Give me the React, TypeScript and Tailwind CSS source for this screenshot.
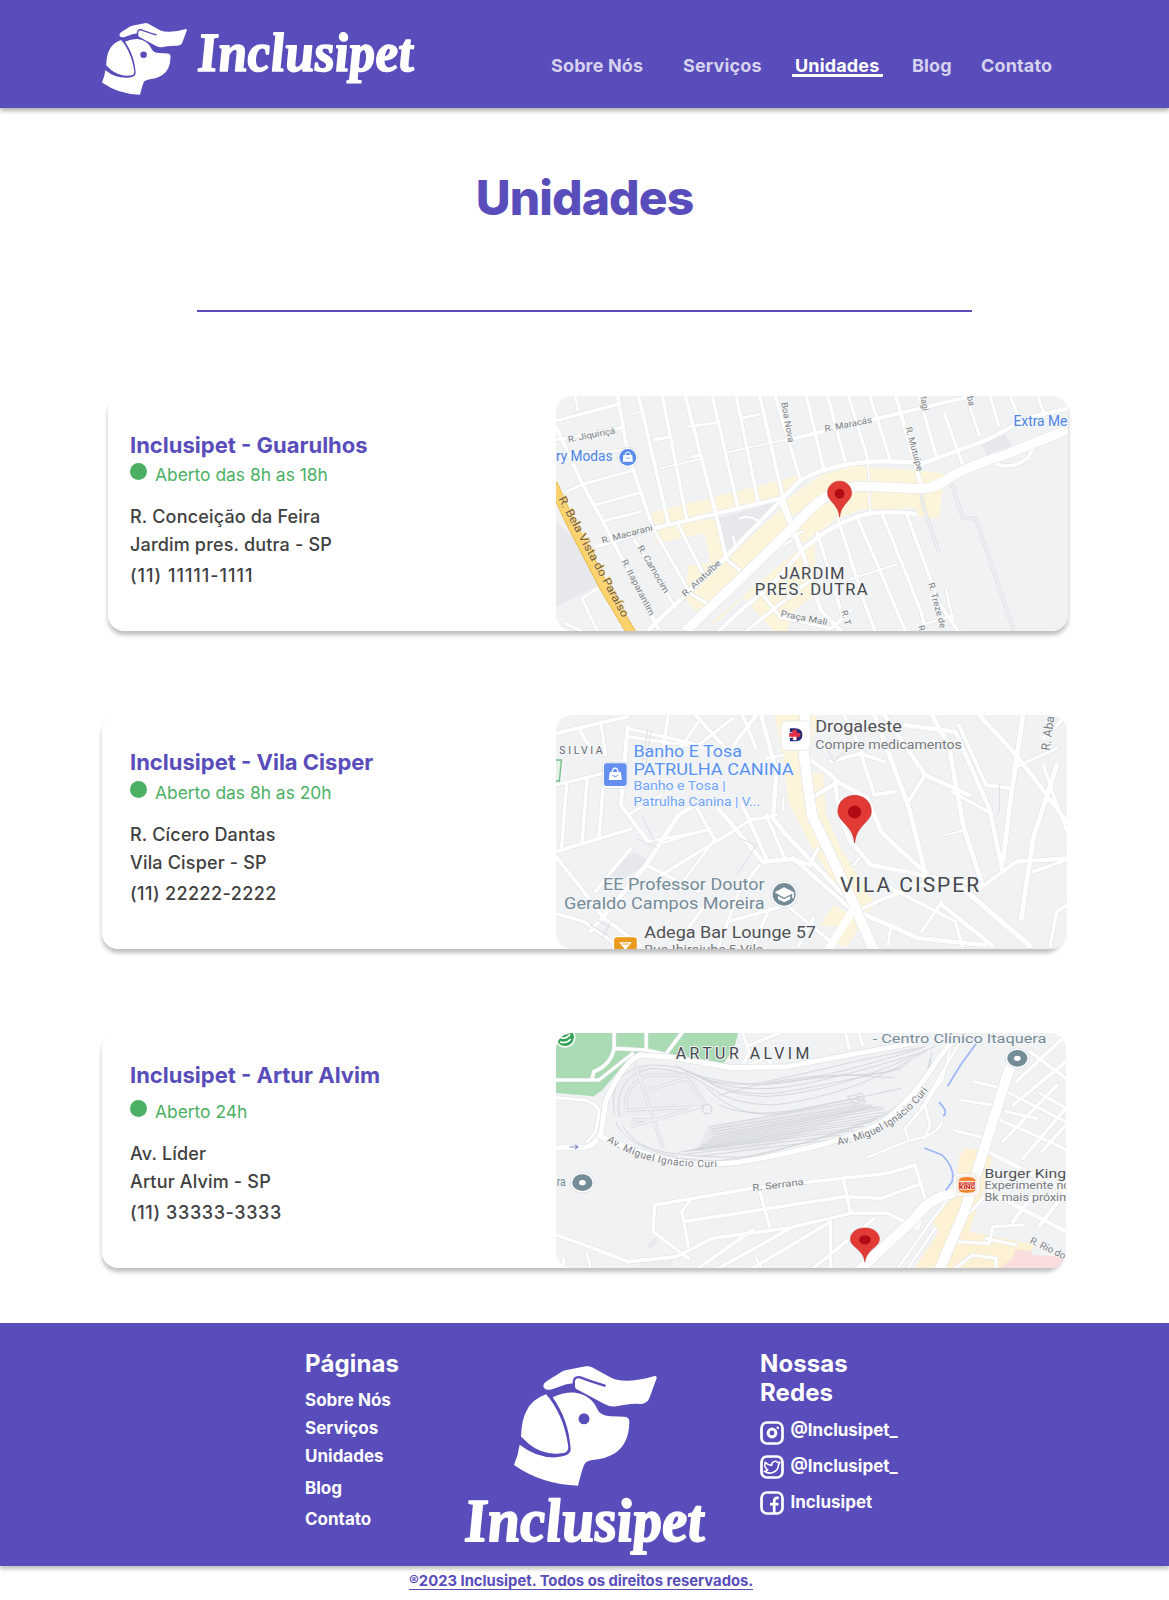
import React from "react";

type Road = [string, number];

function Roads({ roads, casing = "#dfe2e5" }: { roads: Road[]; casing?: string }) {
  return (
    <g fill="none" strokeLinejoin="round" strokeLinecap="round">
      {roads.map(([d, w], i) => (
        <path key={"c" + i} d={d} stroke={casing} strokeWidth={w + 4.5} />
      ))}
      {roads.map(([d, w], i) => (
        <path key={"r" + i} d={d} stroke="#fff" strokeWidth={w + 1.5} />
      ))}
    </g>
  );
}

type LabelProps = {
  x: number;
  y: number;
  size: number;
  w?: number;
  rot?: number;
  fill?: string;
  weight?: number;
  spaced?: boolean;
  children: string;
};

function Label({ x, y, size, w, rot = 0, fill = "#7b7f84", weight = 400, spaced = false, children }: LabelProps) {
  return (
    <text
      x={x}
      y={y}
      fontSize={size}
      fill={fill}
      fontWeight={weight}
      textLength={w}
      lengthAdjust={spaced ? "spacing" : "spacingAndGlyphs"}
      stroke="#f5f6f7"
      strokeWidth={6}
      strokeLinejoin="round"
      paintOrder="stroke"
      transform={rot ? `rotate(${rot} ${x} ${y})` : undefined}
    >
      {children}
    </text>
  );
}

function Pin({ x, y, w, h }: { x: number; y: number; w: number; h: number }) {
  return (
    <svg x={x} y={y} width={w} height={h} viewBox="0 0 74 108" preserveAspectRatio="none" overflow="visible">
      <path
        d="M37 107C35 88 29 79 17 65C7 54 1 48 1 36C1 15 17 1 37 1C57 1 73 15 73 36C73 48 67 54 57 65C45 79 39 88 37 107Z"
        fill="#e23b36"
        stroke="#c5221f"
        strokeWidth="1.5"
      />
      <circle cx="37" cy="38" r="14.5" fill="#b10c15" />
    </svg>
  );
}

function MapGuarulhos() {
  return (
    <svg className="block h-full w-full" viewBox="18 18 1512 704" preserveAspectRatio="none" fontFamily="Roboto, sans-serif">
      <rect x="18" y="18" width="1512" height="704" fill="#f0f2f4" />
      <path d="M18 395L70 445L155 580L18 650Z M490 385L665 338L520 490Z M1275 160L1335 120L1365 165L1290 195Z" fill="#e6e8ec" />
      <g fill="#fcf5dc">
        <path d="M298 368L730 258L740 275L685 330L310 405Z" />
        <path d="M300 410L490 385L520 495L580 540L470 640L430 665L395 620L410 525L475 515L455 430L315 460Z" />
        <path d="M530 497L688 350L720 400L560 545Z" />
        <path d="M690 335L800 255L900 228L1075 240L1165 250L1150 385L1085 380L1080 355L920 358L850 385L745 460L720 425L830 300L700 390Z" />
        <path d="M460 710L730 480L780 445L790 610L720 660L700 722L660 722L570 620L500 690Z" />
      </g>
      <Roads
        roads={[
          ["M18 92L205 42", 9], ["M18 150L215 112", 8], ["M75 18L82 60", 7], ["M50 190L215 180", 5],
          ["M200 18L230 190L305 415", 10], ["M262 18L350 400", 10], ["M332 18L405 392", 9], ["M400 18L490 370L520 500", 10],
          ["M480 18L555 350", 9], ["M550 18L615 335", 9], ["M620 18L690 330L745 485L800 660L860 722", 10], ["M665 18L740 270", 9],
          ["M758 18L808 235", 9], ["M820 18L872 212", 9], ["M882 18L940 212", 9], ["M945 18L1005 210", 9], ["M1022 18L1100 300", 11],
          ["M1090 18L1140 195", 9], ["M1165 70L1218 220", 9], ["M1230 18L1268 135", 8], ["M1300 18L1325 105", 8], ["M1360 18L1385 85", 8], ["M1440 18L1460 75", 8],
          ["M410 110L492 98", 8], ["M310 148L360 140", 9], ["M420 200L440 196", 8], ["M565 85L620 72", 8],
          ["M230 75L280 62", 4], ["M325 235L440 208", 4], ["M520 188L700 148", 4],
          ["M18 110L95 280L160 400L320 715", 10], ["M50 305L95 283L248 240", 7], ["M130 345L265 308", 8], ["M165 390L270 365", 8],
          ["M140 468L305 415L680 325", 11], ["M700 150L1230 22", 10], ["M1100 220L1290 150L1420 80L1530 55", 11],
          ["M1100 220Q880 195 740 270L515 505L310 700L290 722", 12],
          ["M380 405L450 545", 9], ["M305 415L415 610L465 640", 8], ["M250 450L370 650", 8], ["M520 505L560 540", 9],
          ["M680 330L740 480", 10], ["M560 385Q590 370 625 400", 5], ["M540 440L550 470L528 485", 5],
          ["M715 440L745 425M690 465L715 450", 6],
          ["M500 722Q580 640 650 590L740 485Q840 390 950 368Q1020 362 1080 372", 11],
          ["M940 215L945 360", 4], ["M850 385L930 640L960 722", 9], ["M905 375L1050 722", 9], ["M980 368L1095 660L1110 722", 9],
          ["M1055 375L1150 640L1205 722", 9], ["M790 430L865 680", 9], ["M860 575L1025 522", 5], ["M630 615L680 680L830 715L890 660", 9], ["M580 722L780 560", 9],
          ["M95 722L45 700M95 625L155 585M95 625L140 722", 7], ["M1170 600L1190 690M1110 700L1190 675", 6],
          ["M1290 205Q1350 250 1410 205Q1440 150 1465 135", 9],
        ]}
      />
      <g fill="none" strokeLinejoin="round">
        <path d="M1180 260L1220 385H1258L1370 722M1095 310L1110 375L1150 488" stroke="#d9dcdf" strokeWidth="10" />
        <path d="M1180 260L1220 385H1258L1370 722M1095 310L1110 375L1150 488" stroke="#f0f2f4" strokeWidth="6" />
        <path d="M400 722L560 568L725 405Q820 285 930 288L1100 296Q1150 290 1190 255Q1270 215 1330 200L1530 118" stroke="#e2e4e7" strokeWidth="31" />
        <path d="M400 722L560 568L725 405Q820 285 930 288L1100 296Q1150 290 1190 255Q1270 215 1330 200L1530 118" stroke="#fff" strokeWidth="28" />
        <path d="M8 280L55 385L160 590L245 735" stroke="#e9b84b" strokeWidth="29" />
        <path d="M8 280L55 385L160 590L245 735" stroke="#fbd36e" strokeWidth="24" />
      </g>
      <Label x={55} y={157} size={26} w={142} rot={-11}>R. Jiquiriçá</Label>
      <Label x={813} y={125} size={26} w={142} rot={-11}>R. Maracás</Label>
      <Label x={683} y={38} size={26} w={122} rot={80}>Boa Nova</Label>
      <Label x={1095} y={20} size={26} rot={82}>tagi</Label>
      <Label x={1232} y={20} size={26} rot={78}>ba</Label>
      <Label x={1050} y={113} size={26} w={136} rot={75}>R. Mutuípe</Label>
      <Label x={155} y={460} size={26} w={155} rot={-15}>R. Macarani</Label>
      <Label x={258} y={472} size={26} w={160} rot={60}>R. Camocim</Label>
      <Label x={211} y={513} size={26} w={185} rot={63}>R. Itaparantim</Label>
      <Label x={400} y={620} size={26} w={145} rot={-43}>R. Aratuíbe</Label>
      <Label x={680} y={678} size={26} w={140} rot={11}>Praça Mali</Label>
      <Label x={860} y={663} size={26} rot={75}>R. T</Label>
      <Label x={1117} y={580} size={26} w={140} rot={75}>R. Treze de</Label>
      <Label x={1087} y={708} size={26} rot={75}>R</Label>
      <text x="24" y="326" fontSize="34" fill="#76603c" textLength="405" lengthAdjust="spacingAndGlyphs" transform="rotate(62 24 326)" stroke="#fbdc8c" strokeWidth="4" paintOrder="stroke">R. Bela Vista do Paraíso</text>
      <Label x={18} y={214} size={42} w={167} fill="#4b83e6">ry Modas</Label>
      <circle cx="230" cy="202" r="30" fill="#fff" stroke="#d4d8de" strokeWidth="2" />
      <circle cx="230" cy="202" r="25" fill="#5b8def" />
      <path d="M217 195H243L245 215H215Z" fill="#fff" />
      <path d="M223 196V191Q230 181 237 191V196" fill="none" stroke="#fff" strokeWidth="3" />
      <path d="M224 202Q230 210 236 202" fill="none" stroke="#5b8def" strokeWidth="2.5" />
      <Label x={1369} y={108} size={42} w={159} fill="#4b83e6">Extra Me</Label>
      <Label x={677} y={567} size={49} w={193} fill="#45494d" spaced>JARDIM</Label>
      <Label x={605} y={614} size={49} w={333} fill="#45494d" spaced>PRES. DUTRA</Label>
      <Pin x={819} y={272} w={73} h={110} />
    </svg>
  );
}

function MapVilaCisper() {
  return (
    <svg className="block h-full w-full" viewBox="18 30 1512 702" preserveAspectRatio="none" fontFamily="Roboto, sans-serif">
      <rect x="18" y="30" width="1512" height="702" fill="#f0f2f4" />
      <path d="M185 490L250 440L300 470L220 520L165 510Z" fill="#e6e8ec" />
      <g fill="#fcf5dc">
        <path d="M665 30H790L775 120L745 130L775 330L865 480L965 600L940 620L870 580L775 430L705 290L690 160Z" />
        <path d="M775 205H808L818 330L860 430L965 600L935 625L790 340Z" />
        <path d="M800 660L840 600L925 650L880 725L850 720L870 665Z" />
      </g>
      <Roads
        roads={[
          ["M18 85L230 35", 10], ["M18 240L220 190", 8], ["M18 440L240 372", 9], ["M85 70L120 130", 9], ["M150 50L165 150", 8],
          ["M230 65L210 300L290 410", 11], ["M350 30L335 130", 9], ["M110 225L95 410", 9], ["M160 215L145 400", 9], ["M50 232L35 425", 9],
          ["M230 70L440 120L540 40", 9], ["M430 30L530 140L610 30", 10], ["M440 50L385 130", 8], ["M570 30L610 130", 9], ["M230 95L530 140", 8],
          ["M240 325L330 270", 7], ["M430 300L380 330L285 480L155 640", 13], ["M430 300L485 400", 9], ["M490 300L630 470L720 462L770 480", 12],
          ["M570 300L640 460", 10], ["M600 340L540 380L490 410L330 510", 9], ["M625 30L670 200L660 340L700 390L860 560L900 600", 12],
          ["M640 330L695 460", 9], ["M640 160L690 150", 8], ["M690 280V315", 6], ["M600 345L670 330", 8],
          ["M240 430L165 520L135 560", 9], ["M285 480L440 560", 9], ["M330 415L475 370", 7], ["M290 410L470 375", 7],
          ["M490 400L375 555", 7], ["M620 480L560 560L500 722", 9], ["M18 455L100 560L160 640L270 722", 10], ["M18 625L100 650L200 722", 9], ["M120 680L170 620", 9],
          ["M530 650L700 600L830 710", 9], ["M650 610L600 722", 8], ["M460 600L370 722", 8], ["M780 640L735 722", 9],
          ["M770 475L792 432", 10], ["M720 460L900 620", 12],
          ["M745 150Q830 200 850 230L940 280L980 380Q1070 470 1115 505", 12], ["M780 275L845 235Q850 330 890 410L950 480L1150 520L1280 540", 12],
          ["M830 170L920 145L960 270L1020 260", 10], ["M870 30L930 150L990 170", 9], ["M960 30L1060 300L1110 500", 13], ["M990 30L1110 210L1240 270", 12],
          ["M1050 60L1200 80L1300 310L1340 500", 12], ["M1130 30L1180 120L1225 370L1280 540", 13], ["M1110 210L1055 300", 10], ["M1190 260L1305 325", 9],
          ["M1210 60L1290 240L1370 250", 10], ["M1270 30L1380 150L1530 350", 12], ["M1400 30L1365 270L1340 470", 13], ["M1460 100L1530 30", 9],
          ["M1500 180L1430 400L1395 640", 13], ["M1370 190L1500 130", 8], ["M1460 180L1490 270L1530 380", 9],
          ["M1260 560L1380 470L1530 460", 11], ["M1210 540L1420 722", 15], ["M1160 600L1310 722", 12], ["M1430 500L1530 465", 9],
          ["M905 620L990 580L1150 520", 10], ["M910 620Q980 650 1090 700L1290 720", 12], ["M1000 545L1200 650L1220 722", 9], ["M1100 680L1160 590", 8],
          ["M900 480L915 460", 7], ["M1170 390L1230 375", 5], ["M1480 722L1500 620L1530 600", 8], ["M1000 722L1010 660", 8],
        ]}
      />
      <g fill="none" stroke="#fff">
        <path d="M755 30L752 150L775 330L900 600L960 740" stroke="#e2e4e7" strokeWidth="34" />
        <path d="M755 30L752 150L775 330L900 600L960 740" strokeWidth="30" />
        <path d="M900 610L820 740" strokeWidth="22" />
      </g>
      <g fill="none" stroke="#dcdfe3" strokeWidth="3">
        <path d="M290 70L270 190M300 75L282 190M270 330L310 410M255 400L320 430M560 400L610 420L555 510M1330 240V320L1320 330M120 660L170 690M140 645L180 670M155 700L180 650M810 110L840 170L870 140" />
      </g>
      <path d="M5 165H34L28 228H5Z" fill="#e3f3e6" stroke="#72bf85" strokeWidth="4" />
      <Label x={28} y={148} size={31} w={128} fill="#65696e" spaced>SILVIA</Label>
      <rect x="156" y="172" width="74" height="78" rx="10" fill="#fff" stroke="#d4d8de" strokeWidth="2" />
      <rect x="160" y="175" width="67" height="68" rx="8" fill="#648ff0" />
      <path d="M177 201H210L213 225H174Z" fill="#fff" />
      <path d="M185 202V196Q193 182 201 196V202" fill="none" stroke="#fff" strokeWidth="4" />
      <path d="M185 210Q193 219 202 210" fill="none" stroke="#648ff0" strokeWidth="3" />
      <Label x={247} y={155} size={52} w={321} fill="#5692f4">Banho E Tosa</Label>
      <Label x={247} y={209} size={52} w={474} fill="#5692f4">PATRULHA CANINA</Label>
      <Label x={247} y={255} size={41} w={273} fill="#6fa4f8">Banho e Tosa |</Label>
      <Label x={247} y={302} size={41} w={375} fill="#6fa4f8">Patrulha Canina | V...</Label>
      <rect x="684" y="48" width="88" height="88" rx="16" fill="#fff" stroke="#dcdfe3" strokeWidth="2" />
      <path d="M710 70H725Q747 70 747 90Q747 109 725 109H710V98H726Q734 98 734 90Q734 82 726 82H710Z" fill="#1e2a78" />
      <path d="M718 74H731V84H741V95H731V105H718V95H708V84H718Z" fill="#e32f45" />
      <path d="M720 95H729V106H720Z" fill="#fff" />
      <Label x={785} y={80} size={52} w={256} fill="#505255">Drogaleste</Label>
      <Label x={785} y={131} size={41} w={434} fill="#777a7e">Compre medicamentos</Label>
      <Label x={1478} y={138} size={36} rot={-82}>R. Aba</Label>
      <Label x={157} y={556} size={52} w={478} fill="#748b98">EE Professor Doutor</Label>
      <Label x={42} y={613} size={52} w={593} fill="#748b98">Geraldo Campos Moreira</Label>
      <circle cx="693" cy="568" r="40" fill="#fff" stroke="#d4d8de" strokeWidth="2" />
      <circle cx="693" cy="568" r="34" fill="#748b98" />
      <path d="M693 547L722 562V580H717V566L693 578L665 562Z M675 573L693 583L711 573V583L693 592L675 583Z" fill="#fff" />
      <Label x={279} y={698} size={52} w={508} fill="#505255">Adega Bar Lounge 57</Label>
      <Label x={279} y={748} size={41} w={353} fill="#777a7e">Rua Ibirajuba,5 Vila</Label>
      <rect x="186" y="693" width="74" height="74" rx="10" fill="#fff" />
      <rect x="190" y="697" width="67" height="67" rx="8" fill="#eb9b1d" />
      <path d="M205 712H242L226 732V745H221V732Z" fill="#fff" />
      <path d="M215 717H233" stroke="#eb9b1d" strokeWidth="3" />
      <Label x={858} y={560} size={62} w={412} fill="#45494d" spaced>VILA CISPER</Label>
      <Pin x={851} y={270} w={101} h={145} />
    </svg>
  );
}

function MapArturAlvim() {
  const tracks = [
    "M190 270Q170 130 300 120Q400 120 460 165T640 215Q860 200 1115 75",
    "M205 275Q190 150 300 130Q400 130 470 185T660 240Q900 215 1140 62",
    "M195 290Q215 350 330 385T560 400Q800 350 960 285T1130 80",
    "M215 300Q250 370 360 385T600 395Q850 330 980 270T1125 100",
    "M400 140Q520 180 640 178T1100 70",
    "M430 150Q530 200 660 190T1100 82",
    "M430 150Q560 225 700 200T1040 130",
    "M370 120Q500 200 640 170T900 110L1110 65",
    "M500 210Q700 150 870 150T1060 110",
    "M640 175L880 150L1020 158",
    "M460 185Q560 290 700 262T1040 190",
    "M500 240Q600 285 780 245T930 235",
    "M470 305L900 230M475 313L930 240M480 321L955 243M485 329L970 245M480 337L985 246M470 345L990 252M460 353L985 262M450 361L975 272M440 368L965 281M420 374L955 290M400 378L930 304M380 382L900 316M400 388L860 330M440 394L820 346",
  ];
  return (
    <svg className="block h-full w-full" viewBox="18 24 1509 705" preserveAspectRatio="none" fontFamily="Roboto, sans-serif">
      <rect x="18" y="24" width="1509" height="705" fill="#f0f2f4" />
      <path d="M18 24H557L545 70L510 120L400 95L245 88L155 195L130 214L18 204Z" fill="#aadbb5" />
      <path d="M265 705L350 690L370 729H260ZM180 200L260 120L430 150L470 250L200 280Z" fill="#eceef1" />
      <g fill="#fcf1d3">
        <path d="M1225 370L1310 375L1300 440L1260 560L1240 620L1440 660L1370 729H1080L1150 620L1130 590L1200 480L1210 400Z" />
      </g>
      <path d="M1375 672L1425 680L1430 690L1527 695V729H1330L1370 700Z" fill="#f9dedd" />
      <path d="M470 305L900 230L960 240L620 375L430 378Z" fill="#dde0e3" opacity=".5" />
      <g fill="none" stroke="#d0d4d8" strokeWidth="2.6">
        {tracks.map((d, i) => (
          <path key={i} d={d} />
        ))}
      </g>
      <g fill="none" strokeLinejoin="round">
        <path d="M250 110L335 370M240 305L445 245M225 255L460 245M290 195L405 160L465 245M225 250Q220 180 290 150H390M240 285H300M290 665L315 645" stroke="#d9dcdf" strokeWidth="10" />
        <path d="M250 110L335 370M240 305L445 245M225 255L460 245M290 195L405 160L465 245M225 250Q220 180 290 150H390M240 285H300M290 665L315 645" stroke="#f0f2f4" strokeWidth="5" />
        <circle cx="465" cy="252" r="14" stroke="#d5d8dc" strokeWidth="4" fill="#f0f2f4" />
        <path d="M880 215L925 205L930 225L900 238Z" stroke="#d5d8dc" strokeWidth="3" />
        <circle cx="912" cy="220" r="6" stroke="#d5d8dc" strokeWidth="3" />
      </g>
      <Roads
        roads={[
          ["M18 165H145L245 85", 7], ["M190 24V70L285 75L350 90M285 24V75M190 70Q180 120 130 140L125 160M390 24L345 85", 8],
          ["M18 218L100 225Q150 240 145 270L135 320L110 350", 8], ["M18 368H95Q135 365 150 320", 13],
          ["M570 24L590 80L570 125M590 60L680 24M875 24L885 70M915 24L925 60", 8], ["M590 120L640 95L660 125", 9],
          ["M310 540L600 490L1000 445L1080 420L1110 520", 9], ["M310 540L305 620L410 700", 9], ["M420 520L390 560L410 665", 8],
          ["M395 590L650 550L870 515L980 520L1100 475", 9], ["M620 495L650 605", 9], ["M868 460L890 565", 9],
          ["M230 710L375 695L480 640L700 610L890 565H1000L1090 610L1100 560", 9], ["M18 630L115 665L180 690L230 710L375 695", 9],
          ["M600 615L440 729M720 605L500 729M830 590L600 729M830 590V729M960 580L780 729", 9], ["M110 685L120 729M40 700V729M610 700L625 729", 7],
          ["M940 397L1055 350L1110 335Q1150 320 1160 290", 6], ["M1160 160L1110 240L1125 300L1110 340M1110 240L1050 310L1060 340", 7],
          ["M1225 30L1100 250", 7], ["M1190 50L1160 170", 5],
          ["M1350 200L1527 290M1350 260L1440 280M1320 280L1500 360L1527 375M1215 225L1340 245M1255 170L1340 190M1200 317L1290 340M1450 205L1527 250", 8],
          ["M1420 80L1527 160M1380 170L1527 30M1370 240L1527 110M1340 350L1500 180M1400 400L1527 250M1455 380L1527 300", 9],
          ["M1285 375L1527 500M1300 500L1527 620M1370 590L1430 510M1450 600L1527 500", 11],
          ["M1240 565L1300 500M1190 650L1300 655L1310 605L1400 600M1200 729L1250 690L1320 700V729M1290 640L1380 660", 8],
          ["M1030 729L1120 600L1180 520M1060 729L1140 610", 6],
        ]}
      />
      <g fill="none" strokeLinecap="round" strokeLinejoin="round">
        <path d="M150 335L165 230Q210 120 265 90L350 95L540 128L700 125L1070 55L1110 38M155 338Q210 360 280 385Q410 430 560 412Q820 365 950 310Q1050 260 1150 100L1200 35" stroke="#e0e3e6" strokeWidth="19" />
        <path d="M150 335L165 230Q210 120 265 90L350 95L540 128L700 125L1070 55L1110 38M155 338Q210 360 280 385Q410 430 560 412Q820 365 950 310Q1050 260 1150 100L1200 35" stroke="#fff" strokeWidth="15" />
        <path d="M910 740L1080 580Q1120 520 1190 505M1360 130L1310 290L1230 550L1150 740" stroke="#e2e4e7" strokeWidth="34" />
        <path d="M910 740L1080 580Q1120 520 1190 505M1360 130L1310 290L1230 550L1150 740" stroke="#fff" strokeWidth="30" />
        <path d="M1262 55L1215 120L1178 182M1152 233Q1180 260 1165 272M1110 370L1160 390Q1200 430 1190 470L1172 495" stroke="#9bb5f7" strokeWidth="5" />
      </g>
      <path d="M58 366H82M74 360L84 366L74 372" stroke="#8990c5" strokeWidth="3" fill="none" />
      <circle cx="45" cy="37" r="31" fill="#fff" />
      <circle cx="45" cy="37" r="26" fill="#2fa254" />
      <path d="M28 34Q42 48 60 28M30 50Q48 58 62 42M40 20Q48 30 58 22" stroke="#fff" strokeWidth="5" fill="none" />
      <defs>
        <path id="curi-west" d="M168 348Q300 440 520 424" />
        <path id="curi-east" d="M852 360Q1030 330 1130 180" />
      </defs>
      <g fill="#777b80" fontSize="30" stroke="#f7f8f9" strokeWidth="5" paintOrder="stroke">
        <text textLength="342">
          <textPath href="#curi-west">Av. Miguel Ignácio Curi</textPath>
        </text>
        <text textLength="322">
          <textPath href="#curi-east">Av. Miguel Ignácio Curi</textPath>
        </text>
      </g>
      <Label x={600} y={498} size={28} w={153} rot={-7}>R. Serrana</Label>
      <Label x={1418} y={653} size={29} rot={26}>R. Rio do</Label>
      <Label x={372} y={101} size={47} w={396} fill="#45494d" spaced>ARTUR ALVIM</Label>
      <Label x={955} y={55} size={41} w={514} fill="#748b98">- Centro Clínico Itaquera</Label>
      <Label x={20} y={484} size={38} w={27} fill="#748b98">ra</Label>
      {[[96, 473], [1383, 100]].map(([cx, cy]) => (
        <g key={cx}>
          <ellipse cx={cx} cy={cy} rx="36" ry="31" fill="#fff" stroke="#d4d8de" strokeWidth="2" />
          <ellipse cx={cx} cy={cy} rx="30" ry="25" fill="#748b98" />
          <ellipse cx={cx} cy={cy} rx="10" ry="8" fill="#fff" />
        </g>
      ))}
      <rect x="1195" y="446" width="76" height="66" rx="14" fill="#fff" stroke="#dcdfe3" strokeWidth="2" />
      <rect x="1201" y="451" width="64" height="55" rx="10" fill="#f7ece0" />
      <path d="M1209 468Q1212 456 1234 456Q1257 456 1260 468Z M1209 494H1260Q1256 503 1234 503Q1212 503 1209 494Z" fill="#f2842b" />
      <text x="1210" y="480" fontSize="12" fontWeight="900" fill="#d62b1e" textLength="49" lengthAdjust="spacingAndGlyphs">BURGER</text>
      <text x="1210" y="492" fontSize="15" fontWeight="900" fill="#d62b1e" textLength="49" lengthAdjust="spacingAndGlyphs">KING</text>
      <Label x={1286} y={459} size={41} w={241} fill="#505255">Burger King</Label>
      <Label x={1286} y={493} size={32} w={254} fill="#777a7e">Experimente no</Label>
      <Label x={1286} y={527} size={32} w={274} fill="#777a7e">Bk mais próximo</Label>
      <Pin x={888} y={608} w={88} h={104} />
    </svg>
  );
}

function DogMark({ className }: { className: string }) {
  return (
    <svg className={className} viewBox="221 48 429 361" preserveAspectRatio="none">
      <g fill="#fff">
        <path d="M309 106Q311 98 321 92L363 66Q369 61 379 60L436 49Q445 47 455 52L514 84Q534 93 563 92Q602 91 640 79Q650 76 649 85L627 145Q620 161 602 162Q575 161 550 165L523 170Q508 171 494 163L408 117Q400 110 404 99L378 103L335 118Q309 124 309 106Z" />
        <path d="M317 133C348 168 374 220 383 285Q387 306 371 310Q310 320 266 283L242 260Q244 210 258 184Q273 149 317 133Z" />
        <path d="M337 142Q367 127 400 128Q452 135 470 176Q478 197 510 199L552 201Q568 202 567 218Q566 280 526 309Q499 327 457 331Q438 334 433 343Q427 352 413 408Q305 405 221 346Q234 316 238 285Q286 323 341 323Q392 321 391 297C387 237 369 188 337 142Z" />
      </g>
      <path d="M401 108Q396 78 420 82Q440 90 493 107" fill="none" stroke="#584dba" strokeWidth="7" strokeLinecap="round" />
      <circle cx="431" cy="207" r="16.5" fill="#584dba" />
    </svg>
  );
}

function Wordmark({ className }: { className: string }) {
  return (
    <svg className={className} viewBox="0 0 242 62" preserveAspectRatio="none" overflow="visible">
      <text
        x="2"
        y="43"
        transform="translate(-3 0) skewX(4)"
        fontFamily="'Liberation Serif', serif"
        fontStyle="italic"
        fontWeight="700"
        fontSize="61"
        textLength="239"
        lengthAdjust="spacingAndGlyphs"
        fill="#fff"
        stroke="#fff"
        strokeWidth="1.8"
        strokeLinejoin="round"
      >
        Inclusipet
      </text>
    </svg>
  );
}

function SocialIcon({ name }: { name: "instagram" | "twitter" | "facebook" }) {
  return (
    <svg className="block size-6 shrink-0" viewBox="0 0 24 24" fill="none" stroke="#fff">
      <rect x="1.5" y="1.5" width="21" height="21" rx="5.5" strokeWidth="2.7" />
      {name === "instagram" && (
        <>
          <circle cx="12" cy="12" r="3.9" strokeWidth="3" />
          <circle cx="17.8" cy="6.8" r="1.4" fill="#fff" stroke="none" />
        </>
      )}
      {name === "twitter" && (
        <path
          d="M4.3 16.3C6.3 16.2 7 15.7 7.8 15C4.9 13.2 4.3 10.4 5.3 7.2C7.2 9.5 9.1 10.2 11.7 10.4C11.4 6.5 15.5 5.2 17.6 7.5L20 7.2L18.5 9.8C18.6 16.2 11.2 20.6 4.3 16.3Z"
          strokeWidth="1.6"
          strokeLinejoin="round"
        />
      )}
      {name === "facebook" && <path d="M14.2 22V10.5Q14.2 6.8 17.3 6.8H18.8M10 13.2H18.5" strokeWidth="2.7" />}
    </svg>
  );
}

const units = [
  {
    name: "Inclusipet - Guarulhos",
    hours: "Aberto das 8h as 18h",
    street: "R. Conceição da Feira",
    area: "Jardim pres. dutra - SP",
    phone: "(11) 11111-1111",
    box: "ml-[108px] mt-[84px] h-[235px]",
    text: "pl-[22px] pt-[35px]",
    textWidth: "w-[448px]",
    mapBox: "w-[512px]",
    status: "mt-1",
    phoneStyle: "tracking-[0.98px]",
    Map: MapGuarulhos,
  },
  {
    name: "Inclusipet - Vila Cisper",
    hours: "Aberto das 8h as 20h",
    street: "R. Cícero Dantas",
    area: "Vila Cisper - SP",
    phone: "(11) 22222-2222",
    box: "ml-[102px] mt-[84px] h-[234px]",
    text: "pl-7 pt-[33px]",
    textWidth: "w-[454px]",
    mapBox: "w-[511px]",
    status: "mt-[5px]",
    phoneStyle: "tracking-[0.4px]",
    Map: MapVilaCisper,
  },
  {
    name: "Inclusipet - Artur Alvim",
    hours: "Aberto 24h",
    street: "Av. Líder",
    area: "Artur Alvim - SP",
    phone: "(11) 33333-3333",
    box: "ml-[102px] mt-[84px] h-[235px]",
    text: "pl-7 pt-7",
    textWidth: "w-[454px]",
    mapBox: "w-[510px]",
    status: "mt-[11px]",
    phoneStyle: "tracking-[0.6px]",
    Map: MapArturAlvim,
  },
];

export default function App() {
  return (
    <div className="flex h-[1600px] w-[1169px] flex-col overflow-hidden bg-white font-['Inter',sans-serif]">
      <header className="flex h-[108px] shrink-0 bg-[#584dba] shadow-[0_3px_4px_rgba(0,0,0,0.3)]">
        <DogMark className="ml-[102px] mt-[23px] h-[72px] w-[85px] shrink-0" />
        <Wordmark className="ml-[10px] mt-[32px] h-[56px] w-[218px] shrink-0" />
        <nav className="ml-[136px] mt-[54px] flex h-6 whitespace-nowrap text-[18px] font-bold leading-6 tracking-[0.15px] text-[#d6d2ef]">
          <a className="w-[132px]">Sobre Nós</a>
          <a className="w-[109px]">Serviços</a>
          <a className="flex h-[23px] w-[91px] flex-col rounded-[1px] border-b-[3px] border-white pl-[3px] text-white">Unidades</a>
          <a className="ml-[29px] w-[69px]">Blog</a>
          <a>Contato</a>
        </nav>
      </header>

      <main className="h-[1215px] shrink-0">
        <h1 className="pt-[60px] text-center text-[48px] font-extrabold leading-[60px] tracking-[-0.9px] text-[#584dba]">Unidades</h1>
        <hr className="mx-auto mt-[82px] w-[775px] border-0 border-t-2 border-solid border-[#584dba]" />
        <section>
          {units.map((u) => (
            <article key={u.name} className={`flex w-[960px] rounded-2xl bg-white shadow-[0_4px_4px_rgba(0,0,0,0.25)] ${u.box}`}>
              <div className={`shrink-0 ${u.textWidth} ${u.text}`}>
                <h2 className="text-[22px] font-bold leading-7 text-[#584dba]">{u.name}</h2>
                <p className={`flex h-6 text-[17.4px] leading-6 text-[#4bb063] ${u.status}`}>
                  <span className="mr-2 size-[17px] rounded-full bg-[#4bb063]" />
                  {u.hours}
                </p>
                <div className="mt-4 text-[18px] font-medium leading-[27.5px] tracking-[0.17px] text-[#404040]">
                  <p>{u.street}</p>
                  <p>{u.area}</p>
                  <p className={`mt-[3.5px] ${u.phoneStyle}`}>{u.phone}</p>
                </div>
              </div>
              <div className={`shrink-0 overflow-hidden rounded-2xl ${u.mapBox}`}>
                <u.Map />
              </div>
            </article>
          ))}
        </section>
      </main>

      <footer className="flex h-[243px] shrink-0 whitespace-nowrap bg-[#584dba] text-white shadow-[0_3px_4px_rgba(0,0,0,0.25)]">
        <div className="ml-[305px] w-[159px] pt-[26px]">
          <h3 className="text-[24px] font-bold leading-[30px] tracking-[0.15px]">Páginas</h3>
          <ul className="mt-[7px] text-[17px] font-bold leading-7">
            <li>Sobre Nós</li>
            <li>Serviços</li>
            <li>Unidades</li>
            <li className="mt-1">Blog</li>
            <li className="mt-[3px]">Contato</li>
          </ul>
        </div>
        <div className="w-[242px] pt-[43px]">
          <DogMark className="ml-[50px] h-[120px] w-[143px]" />
          <Wordmark className="mt-[12px] h-[62px] w-[242px]" />
        </div>
        <div className="ml-[54px] pt-[26px]">
          <h3 className="text-[24px] font-bold leading-[29px] tracking-[0.1px]">
            Nossas
            <br />
            Redes
          </h3>
          <ul className="mt-[14px] flex flex-col text-[17px] font-bold leading-6">
            <li className="flex gap-[6.5px]"><SocialIcon name="instagram" /><span className="-mt-[3px]">@Inclusipet_</span></li>
            <li className="mt-[10px] flex gap-[6.5px]"><SocialIcon name="twitter" /><span className="-mt-[1px]">@Inclusipet_</span></li>
            <li className="mt-[12px] flex gap-[6.5px]"><SocialIcon name="facebook" /><span className="-mt-px">Inclusipet</span></li>
          </ul>
        </div>
      </footer>
      <p className="ml-[409px] mt-1 h-5 w-fit border-b border-[#584dba] pt-0.5 text-[14.8px] font-bold leading-[19px] text-[#584dba]">
        ®2023 Inclusipet. Todos os direitos reservados.
      </p>
    </div>
  );
}
